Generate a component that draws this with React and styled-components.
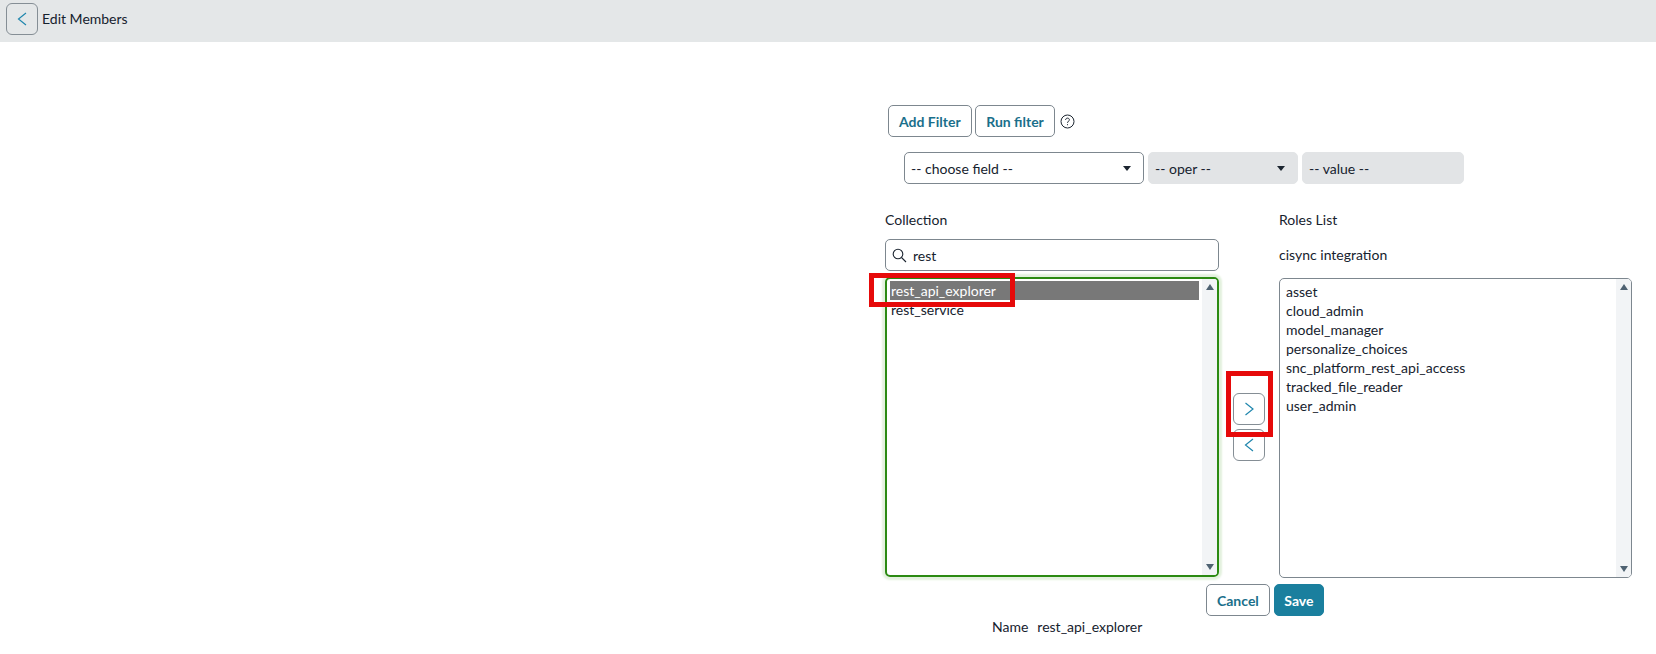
import React from 'react';
import styled, { createGlobalStyle } from 'styled-components';

const GlobalStyle = createGlobalStyle`
  html, body {
    margin: 0;
    padding: 0;
    background: #fff;
  }
  body {
    font-family: 'Lato', 'Liberation Sans', sans-serif;
    font-size: 14px;
    color: #16222e;
  }
`;

const Page = styled.div`
  position: relative;
  width: 1656px;
  height: 654px;
  overflow: hidden;
  background: #fff;
`;

const TopBar = styled.header`
  height: 42px;
  background: #e4e7e8;
  display: flex;
  align-items: flex-start;
  padding: 3px 0 0 6px;
  box-sizing: border-box;
  gap: 4px;
`;

const IconButton = styled.button`
  width: 32px;
  height: 32px;
  padding: 0;
  display: flex;
  align-items: center;
  justify-content: center;
  background: transparent;
  border: 1px solid #858e95;
  border-radius: 6px;
  color: #1f86ad;
`;

const BarTitle = styled.div`
  font-size: 14px;
  line-height: 31px;
`;

const Form = styled.main`
  margin-left: 885px;
  padding-top: 63px;
  width: 747px;
`;

const ActionRow = styled.div`
  display: flex;
  align-items: center;
  gap: 3px;
  margin-left: 3px;
`;

const Button = styled.button`
  height: 32px;
  padding: 0 ${props => props.pad || 10}px;
  font-family: inherit;
  font-size: 14px;
  font-weight: 700;
  border-radius: 5px;
  border: 1px solid ${props => props.primary ? '#1a7f9e' : '#7d878f'};
  background: ${props => props.primary ? '#1a7f9e' : '#fff'};
  color: ${props => props.primary ? '#fff' : '#1a6f8b'};
`;

const Help = styled.span`
  display: flex;
  margin-left: 2px;
`;

const FilterRow = styled.div`
  display: flex;
  gap: 4px;
  margin: 15px 0 0 19px;
`;

const FilterBox = styled.div`
  width: ${props => props.w}px;
  height: 32px;
  box-sizing: border-box;
  display: flex;
  align-items: center;
  justify-content: space-between;
  padding: 0 12px 0 6px;
  border-radius: 5px;
  border: 1px solid ${props => props.disabled ? '#e2e4e6' : '#7d878f'};
  background: ${props => props.disabled ? '#e2e4e6' : '#fff'};
`;

const Caret = styled.span`
  width: 0;
  height: 0;
  border-left: 4px solid transparent;
  border-right: 4px solid transparent;
  border-top: 5px solid #1c2530;
`;

const Lists = styled.div`
  display: grid;
  grid-template-columns: 334px 60px 353px;
  margin-top: 27px;
`;

const Column = styled.section`
  display: flex;
  flex-direction: column;
`;

const Label = styled.div`
  height: 18px;
  line-height: 18px;
`;

const SearchBox = styled.div`
  height: 32px;
  box-sizing: border-box;
  margin-top: 10px;
  display: flex;
  align-items: center;
  gap: 6px;
  padding-left: 6px;
  border: 1px solid #7d878f;
  border-radius: 5px;
`;

const Subtitle = styled.div`
  height: 32px;
  line-height: 32px;
  margin-top: 10px;
`;

const ListBox = styled.div`
  position: relative;
  height: 300px;
  margin-top: ${props => props.focused ? 6 : 7}px;
  padding: ${props => props.focused ? '2px 3px' : '3px 4px'};
  box-sizing: border-box;
  border: ${props => props.focused ? '2px solid #2b8a12' : '1px solid #7d878f'};
  border-radius: 5px;
  box-shadow: ${props => props.focused ? '0 0 2px 3px #e3f1de' : 'none'};
  overflow: hidden;
`;

const Option = styled.div`
  height: 19px;
  line-height: 19px;
  padding-left: ${props => props.selected !== undefined ? 1 : 2}px;
  margin-right: 15px;
  background: ${props => props.selected ? '#787878' : 'transparent'};
  color: ${props => props.selected ? '#fff' : 'inherit'};
`;

const Scrollbar = styled.div`
  position: absolute;
  top: 0;
  right: 0;
  bottom: 0;
  width: 15px;
  background: #f2f4f6;
  display: flex;
  flex-direction: column;
  justify-content: space-between;
  align-items: center;
  padding: 5px 0;
  box-sizing: border-box;
`;

const ScrollArrow = styled.span`
  width: 0;
  height: 0;
  border-left: 4px solid transparent;
  border-right: 4px solid transparent;
  border-${props => props.up ? 'bottom' : 'top'}: 6px solid #4f6272;
`;

const Movers = styled.div`
  display: flex;
  flex-direction: column;
  align-items: center;
  gap: 4px;
  padding-top: 182px;
`;

const Highlight = styled.div`
  position: absolute;
  border: 5px solid #e60a0a;
  box-sizing: border-box;
  pointer-events: none;
  left: ${props => props.x}px;
  top: ${props => props.y}px;
  width: ${props => props.w}px;
  height: ${props => props.h}px;
`;

const Footer = styled.div`
  display: flex;
  gap: 4px;
  margin: 6px 0 0 321px;
`;

const NameRow = styled.div`
  display: flex;
  gap: 9px;
  margin: 2px 0 0 107px;
`;

const Chevron = ({ left }) => (
  <svg width="12" height="16" viewBox="0 0 12 16" fill="none" stroke="currentColor" strokeWidth="1.2">
    <path d={left ? 'M10 2 2.5 8l7.5 6' : 'M2.5 2 10 8l-7.5 6'} />
  </svg>
);

const roles = ['asset', 'cloud_admin', 'model_manager', 'personalize_choices', 'snc_platform_rest_api_access', 'tracked_file_reader', 'user_admin'];

const App = () => (
  <Page>
    <GlobalStyle />
    <TopBar>
      <IconButton><Chevron left /></IconButton>
      <BarTitle>Edit Members</BarTitle>
    </TopBar>
    <Form>
      <ActionRow>
        <Button>Add Filter</Button>
        <Button pad={10.5}>Run filter</Button>
        <Help>
          <svg width="15" height="15" viewBox="0 0 15 15" fill="none" stroke="#1c2530">
            <circle cx="7.5" cy="7.5" r="6.5" />
            <path d="M5.6 6c0-1.2.9-1.9 1.9-1.9s1.9.7 1.9 1.7c0 1.4-1.9 1.5-1.9 3" />
            <path d="M7.5 10.2v1" />
          </svg>
        </Help>
      </ActionRow>
      <FilterRow>
        <FilterBox w={240}>-- choose field --<Caret /></FilterBox>
        <FilterBox w={150} disabled>-- oper --<Caret /></FilterBox>
        <FilterBox w={162} disabled>-- value --</FilterBox>
      </FilterRow>
      <Lists>
        <Column>
          <Label>Collection</Label>
          <SearchBox>
            <svg width="15" height="15" viewBox="0 0 15 15" fill="none" stroke="#1c2530" strokeWidth="1.1">
              <circle cx="6" cy="6" r="4.8" />
              <path d="m9.5 9.5 4.5 4.5" />
            </svg>
            rest
          </SearchBox>
          <ListBox focused>
            <Option selected>rest_api_explorer</Option>
            <Option selected={false}>rest_service</Option>
            <Scrollbar><ScrollArrow up /><ScrollArrow /></Scrollbar>
          </ListBox>
        </Column>
        <Movers>
          <IconButton><Chevron /></IconButton>
          <IconButton><Chevron left /></IconButton>
        </Movers>
        <Column>
          <Label>Roles List</Label>
          <Subtitle>cisync integration</Subtitle>
          <ListBox>
            {roles.map(role => <Option key={role}>{role}</Option>)}
            <Scrollbar><ScrollArrow up /><ScrollArrow /></Scrollbar>
          </ListBox>
        </Column>
      </Lists>
      <Footer>
        <Button>Cancel</Button>
        <Button primary pad={9.5}>Save</Button>
      </Footer>
      <NameRow>
        <span>Name</span>
        <span>rest_api_explorer</span>
      </NameRow>
    </Form>
    <Highlight x={869} y={273} w={146} h={34} />
    <Highlight x={1226} y={371} w={47} h={66} />
  </Page>
);

export default App;
